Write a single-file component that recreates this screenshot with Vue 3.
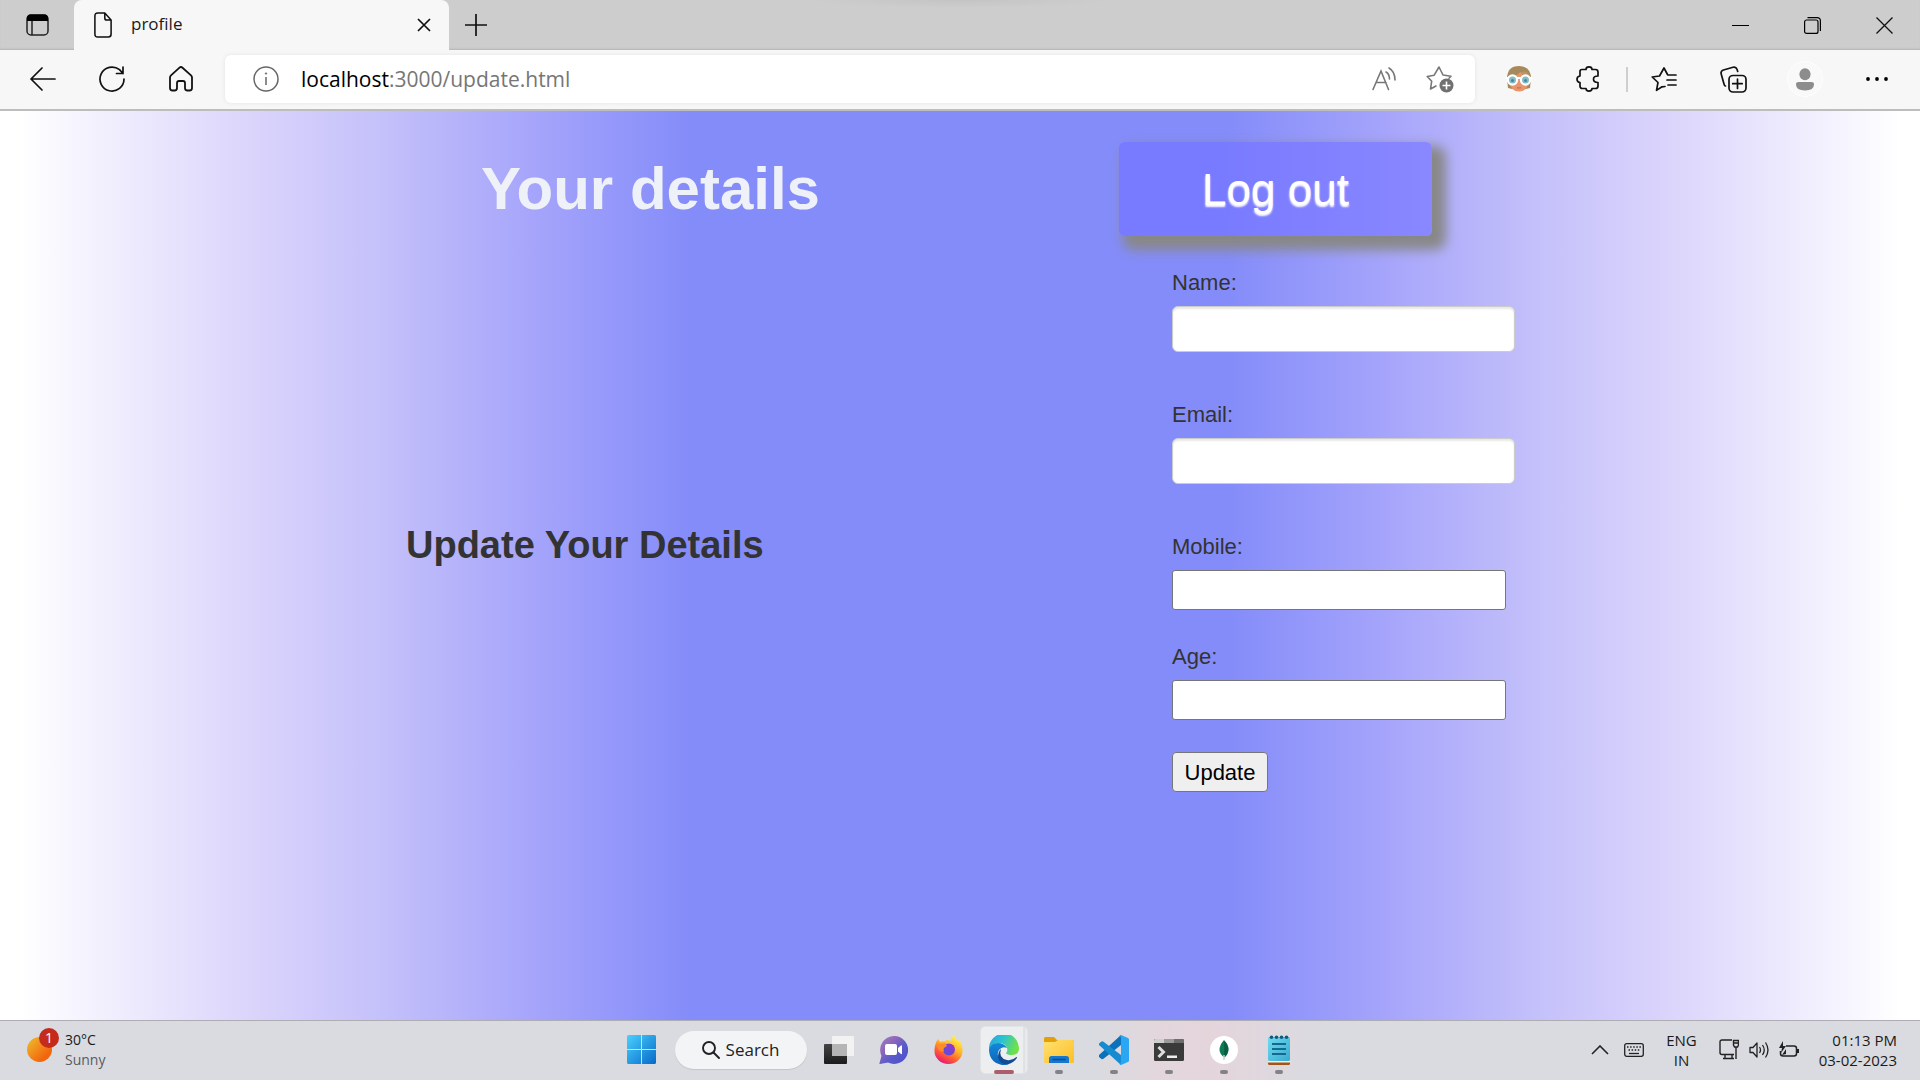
<script setup>
import { reactive } from 'vue'

const form = reactive({ name: '', email: '', mobile: '', age: '' })
</script>

<template>
  <div class="desktop">
    <header class="browser">
      <div class="tabstrip">
        <button class="icon-btn tab-actions" aria-label="Tab actions">
          <svg width="24" height="24" viewBox="0 0 24 24"><rect x="2" y="2" width="21" height="20" rx="4" fill="none" stroke="#222" stroke-width="1.5"/><path d="M2 8V5q0-3.500 3.500-3.500h14Q23 1.500 23 5v3z"/><path d="M7 8v14" stroke="#222" stroke-width="1.500"/></svg>
        </button>
        <div class="tab">
          <svg width="18" height="26" viewBox="0 0 20 26" preserveAspectRatio="none" fill="none" stroke="#111" stroke-width="1.700" stroke-linejoin="round"><path d="M4 1h8l7 7v14q0 3-3 3H4q-3 0-3-3V4q0-3 3-3zM12 1v5q0 2 2 2h5"/></svg>
          <span class="tab-title">profile</span>
          <button class="icon-btn" aria-label="Close tab"><svg width="14" height="14" viewBox="0 0 14 14" stroke="#111" stroke-width="1.700"><path d="M1 1l12 12M13 1L1 13"/></svg></button>
        </div>
        <button class="icon-btn new-tab" aria-label="New tab"><svg width="22" height="22" viewBox="0 0 22 22" stroke="#111" stroke-width="1.700"><path d="M11 0v22M0 11h22"/></svg></button>
        <div class="win-controls">
          <button class="icon-btn" aria-label="Minimize"><svg width="17" height="17" viewBox="0 0 17 17" stroke="#000" shape-rendering="crispEdges"><path d="M0 8.500h17"/></svg></button>
          <button class="icon-btn" aria-label="Restore"><svg width="17" height="17" viewBox="0 0 17 17" fill="none" stroke="#000" stroke-width="1.200"><rect x=".6" y="3" width="13.400" height="13.400" rx="2"/><path d="M3.500 .6h9.500q3.400 0 3.400 3.400v10"/></svg></button>
          <button class="icon-btn" aria-label="Close"><svg width="17" height="17" viewBox="0 0 17 17" stroke="#111" stroke-width="1.300"><path d="M.5.5l16 16M16.500.5l-16 16"/></svg></button>
        </div>
      </div>

      <div class="toolbar">
        <nav class="nav-buttons">
          <button class="icon-btn" aria-label="Back"><svg width="26" height="24" viewBox="0 0 26 24" fill="none" stroke="#111" stroke-width="1.700" stroke-linecap="round" stroke-linejoin="round"><path d="M25 12H1M12 1L1 12l11 11"/></svg></button>
          <button class="icon-btn" aria-label="Refresh"><svg width="26" height="26" viewBox="0 0 26 26" fill="none" stroke="#111" stroke-width="1.700" stroke-linecap="round" stroke-linejoin="round"><path d="M25 13a12 12 0 1 1-4.500-9.300L24 7.500M24 1v6.500h-6.500"/></svg></button>
          <button class="icon-btn" aria-label="Home"><svg width="24" height="26" viewBox="0 0 24 26" fill="none" stroke="#111" stroke-width="1.800" stroke-linejoin="round"><path d="M1 11.500q0-1.300 1-2.200L10.500 1.700q1.500-1.300 3 0L22 9.300q1 .9 1 2.200V22q0 2.500-2.500 2.500h-2Q16 24.500 16 22v-5q0-2-2-2h-4q-2 0-2 2v5q0 2.500-2.500 2.500h-2Q1 24.500 1 22z"/></svg></button>
        </nav>
        <div class="address">
          <svg width="26" height="26" viewBox="0 0 26 26" fill="none" stroke="#666" stroke-width="1.500"><circle cx="13" cy="13" r="12"/><path d="M13 11v8"/><circle cx="13" cy="7.500" r=".8" fill="#666" stroke-width=".6"/></svg>
          <p class="url"><span>localhost</span>:3000/update.html</p>
          <button class="icon-btn" aria-label="Read aloud"><svg width="25" height="24" viewBox="0 0 25 24" fill="none" stroke="#777" stroke-width="1.600" stroke-linecap="round"><path d="M1 22.500L9 4l7.500 18.500M4 15.500h10M14 5q3.500 2 3.500 7M17 1q6 3.500 6 12"/></svg></button>
          <button class="icon-btn" aria-label="Add to favorites"><svg width="28" height="28" viewBox="0 0 28 28"><path d="M10 21l-5.500 3 1.200-7.800L1.200 11.500l7-1.300L13 2l4 8 8 1.300-2 2" fill="none" stroke="#777" stroke-width="1.600" stroke-linejoin="round" stroke-linecap="round"/><circle cx="20.500" cy="20.500" r="7" fill="#707070"/><path d="M20.500 16.500v8M16.500 20.500h8" stroke="#fff" stroke-width="1.600"/></svg></button>
        </div>
        <div class="extensions">
          <button class="icon-btn" aria-label="Extension"><svg width="26" height="26" viewBox="0 0 26 26"><path d="M1 13Q1 0 13 0t12 13l-1 9-4 1H6l-4-1z" fill="#a68a5c"/><path d="M3.500 11.500Q11 10 14.500 6q3 4.500 8 5.500v5Q21 25.500 13 25.500T3.500 16.500z" fill="#e8956c"/><path d="M14.500 6q2 4 8 5.500l1-1Q22 4 14.500 6z" fill="#b5966a"/><path d="M0 12h26" stroke="#fff" stroke-width="2"/><circle cx="6.500" cy="14" r="4.600" fill="#86bcc8" stroke="#fff" stroke-width="2.200"/><circle cx="19.500" cy="14" r="4.600" fill="#86bcc8" stroke="#fff" stroke-width="2.200"/><circle cx="6.500" cy="14.500" r="1.500" fill="#4a8799"/><circle cx="19.500" cy="14.500" r="1.500" fill="#4a8799"/><path d="M11 21.500q2 1 4 0" stroke="#cf6d50" stroke-width="1.200" fill="none"/></svg></button>
          <button class="icon-btn" aria-label="Extensions"><svg width="24" height="26" viewBox="0 0 24 26" fill="none" stroke="#111" stroke-width="1.700" stroke-linejoin="round"><path d="M6 3.500h4Q10 .9 13 .9t3 2.600h3.500q2.500 0 2.500 2.500v4q-4.500 0-4.500 3.200T22 16.500V20q0 2.500-2.500 2.500H16q0 2.600-3 2.600t-3-2.600H6.500Q4 22.500 4 20v-3.500q-3-.5-3-3.300T4 10V5.500q0-2 2-2z"/></svg></button>
          <i class="divider"></i>
          <button class="icon-btn" aria-label="Favorites"><svg width="26" height="26" viewBox="0 0 26 26" fill="none" stroke="#111" stroke-width="1.700" stroke-linejoin="round" stroke-linecap="round"><path d="M14 20.500l-3 .3-5.500 3.600L7 16.500 1.200 11l7.300-1L13 2l3.500 6.500M17 9h8M16 14h9M17 19h8"/></svg></button>
          <button class="icon-btn" aria-label="Collections"><svg width="27" height="27" viewBox="0 0 27 27" fill="none" stroke="#111" stroke-width="1.700" stroke-linejoin="round" stroke-linecap="round"><rect x="9" y="9.500" width="17" height="16.500" rx="4"/><path d="M17.500 13v9.500M12.700 17.700h9.500M5.500 20Q4.500 20 4 18L1.200 8q-.8-3 2.300-4L13 1.200q3-.8 4 2l.7 2.300"/></svg></button>
          <button class="icon-btn spaced profile" aria-label="Profile"><svg width="18" height="23" viewBox="0 0 20 24" preserveAspectRatio="none" fill="#8c8c8c"><circle cx="10" cy="6.500" r="6.200"/><path d="M3 14.500h14q3 0 3 2.500 0 6.500-10 6.500T0 17q0-2.500 3-2.500z"/></svg></button>
          <button class="icon-btn spaced" aria-label="Settings"><svg width="22" height="4" viewBox="0 0 22 4"><circle cx="2" cy="2" r="1.900"/><circle cx="11" cy="2" r="1.900"/><circle cx="20" cy="2" r="1.900"/></svg></button>
        </div>
      </div>
    </header>

    <main class="page">
      <div class="page-head">
        <h1>Your details</h1>
        <button class="logout">Log out</button>
      </div>
      <div class="page-body">
        <h2>Update Your Details</h2>
        <form @submit.prevent>
          <label for="name">Name:</label>
          <input id="name" v-model="form.name" class="styled" type="text">
          <label for="email">Email:</label>
          <input id="email" v-model="form.email" class="styled" type="email">
          <label for="mobile">Mobile:</label>
          <input id="mobile" v-model="form.mobile" class="plain" type="text">
          <label for="age">Age:</label>
          <input id="age" v-model="form.age" class="plain" type="text">
          <button class="update" type="submit">Update</button>
        </form>
      </div>
    </main>

    <footer class="taskbar">
      <div class="weather">
        <div class="sun"><span class="badge">1</span></div>
        <p>30°C<br><span>Sunny</span></p>
      </div>

      <div class="apps">
        <button class="app" aria-label="Start"><svg width="29" height="29" viewBox="0 0 29 29"><defs><linearGradient id="win" x1="0" y1="0" x2="1" y2="1" gradientUnits="objectBoundingBox"><stop offset="0" stop-color="#4bd0fe"/><stop offset="1" stop-color="#0669c9"/></linearGradient></defs><path d="M1.500 0H14v14H0V1.500Q0 0 1.500 0zM15 0h12.500Q29 0 29 1.500V14H15zM0 15h14v14H1.500Q0 29 0 27.500zM15 15h14v12.500q0 1.500-1.500 1.500H15z" fill="url(#win)"/></svg></button>
        <button class="search"><svg width="18" height="18" viewBox="0 0 18 18" fill="none" stroke="#222" stroke-width="1.900" stroke-linecap="round"><circle cx="7" cy="7" r="6"/><path d="M11.500 11.500L17 17"/></svg>Search</button>
        <button class="app" aria-label="Task view"><svg width="30" height="28" viewBox="0 0 30 28"><defs><linearGradient id="tv" x1="0" y1="0" x2="0" y2="1"><stop offset="0" stop-color="#444"/><stop offset="1" stop-color="#1c1c1c"/></linearGradient></defs><rect y="8" width="23" height="20" rx="1" fill="url(#tv)"/><rect x="8" width="22" height="20" rx="1" fill="#f2f2f2"/><path d="M8 8h15v12H9q-1 0-1-1z" fill="#b5b5b5"/></svg></button>
        <button class="app" aria-label="Chat"><svg width="29" height="28" viewBox="0 0 29 28"><defs><linearGradient id="ch" x1="0" y1="0" x2="1" y2="1"><stop offset="0" stop-color="#8f86c8"/><stop offset=".3" stop-color="#9369b8"/><stop offset=".6" stop-color="#5a5acb"/><stop offset="1" stop-color="#4a50c8"/></linearGradient></defs><path d="M15 0a14 14 0 1 1-6 26.600L1 28q-1 0-.5-1L2.500 20A14 14 0 0 1 15 0z" fill="url(#ch)"/><rect x="6" y="8" width="12" height="11" rx="2" fill="#fff"/><path d="M19 12l3-2.500q1-.5 1 .5v7.500q0 1-1 .5L19 15.500z" fill="#fff"/></svg></button>
        <button class="app" aria-label="Firefox"><svg width="29" height="29" viewBox="0 0 29 29"><defs><linearGradient id="ff" x1=".8" y1=".1" x2=".3" y2="1"><stop offset="0" stop-color="#fff04a"/><stop offset=".4" stop-color="#ffb02a"/><stop offset=".7" stop-color="#ff5a33"/><stop offset="1" stop-color="#e8137c"/></linearGradient><linearGradient id="fp" x1="0" y1="1" x2="1" y2="0"><stop offset="0" stop-color="#4f55d8"/><stop offset="1" stop-color="#a02fd0"/></linearGradient></defs><path d="M4 4l2 3q2-1 4-.5L13 5q3 0 4 1 0-4 3-6 1 4 4 6l1-1q4 5 3.500 11a14 13 0 0 1-28 0Q.5 9 4 4z" fill="url(#ff)"/><circle cx="15" cy="14.500" r="6" fill="url(#fp)"/><path d="M3 10l8-2 2 3-3 2q-1 1 0 3l-2 1q-4-1-5-7z" fill="#ff8a2a"/></svg></button>
        <button class="app active" aria-label="Edge"><svg width="30" height="30" viewBox="0 0 30 30"><defs><linearGradient id="ea" x1="0" y1="0" x2="1" y2=".3"><stop offset="0" stop-color="#2ba0e0"/><stop offset=".5" stop-color="#2bc3d2"/><stop offset="1" stop-color="#6ee04a"/></linearGradient><linearGradient id="eb" x1="0" y1="0" x2="0" y2="1"><stop offset="0" stop-color="#1488d8"/><stop offset="1" stop-color="#0b64b8"/></linearGradient></defs><path d="M0 14A15 15 0 0 1 30 13q0 7-7 7-5 0-6-2 2-2 1-5-2-5-8-5-7 0-10 6z" fill="url(#ea)"/><path d="M0 14q2-6 9-6 6 0 9 5-5-2-8 2-3 5 1 10 3 4 9 4-4 1.500-8 .7Q0 27 0 14z" fill="url(#eb)"/><path d="M12 14q-3 9 6 11 5 1 9.500-3 .8 0 .5.800Q25 28 18 29.500q-8-1-9-7 0-6 3-8.500z" fill="#124a94"/></svg></button>
        <button class="app running" aria-label="File Explorer"><svg width="30" height="26" viewBox="0 0 30 26"><defs><linearGradient id="fo" x1="0" y1="0" x2="1" y2="1"><stop offset="0" stop-color="#ffe173"/><stop offset="1" stop-color="#fdbe23"/></linearGradient></defs><path d="M0 1.500Q0 0 1.500 0H10l3 3h15.500Q30 3 30 4.500V10H0z" fill="#e19f0a"/><path d="M0 5h11l3-2h14.500Q30 3 30 4.500v20q0 1.500-1.500 1.500h-27Q0 26 0 24.500z" fill="url(#fo)"/><path d="M5 26v-4.500Q5 19 7.500 19h15q2.500 0 2.500 2.500V26z" fill="#1677ce"/><path d="M9 22.500h12" stroke="#0b4b91" stroke-width="1.500" stroke-linecap="round"/></svg></button>
        <button class="app running" aria-label="Visual Studio Code"><svg width="30" height="30" viewBox="0 0 30 30"><path d="M22 0L0 20v2l2.500 2q1 .5 2-.3L22 10z" fill="#0b72b9"/><path d="M22 30L0 10V8.500L2.500 6.500q1-.5 2 .3L22 20z" fill="#168bd2"/><path d="M22 0l7 3q1 .5 1 1.500v21q0 1-1 1.500l-7 3q-1 0-1.500-1 1.500 0 1.500-2V3q0-2-1.500-2 .5-1 1.500-1z" fill="#2aa6f2"/></svg></button>
        <button class="app running" aria-label="Terminal"><svg width="30" height="22" viewBox="0 0 30 22"><rect width="30" height="22" rx="1.500" fill="#3a3a3a"/><path d="M0 4V1.500Q0 0 1.500 0H10v4z" fill="#cfcfcf"/><path d="M10 0h10v4H10z" fill="#9b9b9b"/><path d="M20 0h8.500Q30 0 30 1.500V4H20z" fill="#6d6d6d"/><path d="M4.500 8l5 5-5 5" fill="none" stroke="#ddd" stroke-width="3"/><path d="M13 16.500h10v2.500H13z" fill="#eee"/></svg></button>
        <button class="app running" aria-label="MongoDB Compass"><svg width="28" height="28" viewBox="0 0 28 28"><circle cx="14" cy="14" r="14" fill="#fff"/><path d="M14 4q5 5 4.500 10-.5 5-4 7.500Q10 19 9.500 14 9.500 9 14 4z" fill="#0b7a55"/><path d="M14.200 5q4.500 5 4 9.500-.5 4-4 7z" fill="#0a5c42"/><path d="M14 19v5" stroke="#bcd8cc" stroke-width="1.500"/></svg></button>
        <button class="app running" aria-label="Notepad"><svg width="24" height="30" viewBox="0 0 24 30"><defs><linearGradient id="np" x1="0" y1="0" x2="1" y2="1"><stop offset="0" stop-color="#6fdbf0"/><stop offset="1" stop-color="#3aa9d0"/></linearGradient></defs><path d="M1 25h22v3.500q0 1.500-1.500 1.500h-19Q1 30 1 28.500z" fill="#a3541a"/><path d="M1 25h22v2.500H1z" fill="#f5eee6"/><rect x="1" y="2" width="22" height="24" rx="1.500" fill="url(#np)"/><path d="M5 9h14M5 14h14M5 19h14" stroke="#126a8c" stroke-width="1.800"/><g fill="#0d5c7c"><circle cx="4.500" cy="2.200" r="1.800"/><circle cx="9.500" cy="2.200" r="1.800"/><circle cx="14.500" cy="2.200" r="1.800"/><circle cx="19.500" cy="2.200" r="1.800"/></g></svg></button>
      </div>

      <div class="tray">
        <svg width="18" height="10" viewBox="0 0 18 10" fill="none" stroke="#222" stroke-width="1.600"><path d="M1 9l8-8 8 8"/></svg>
        <svg class="keyboard" width="20" height="14" viewBox="0 0 20 14" fill="none" stroke="#222" stroke-width="1.300"><rect x=".7" y=".7" width="18.600" height="12.600" rx="2"/><path d="M3 4h14" stroke-dasharray="1.500 1.600"/><path d="M4.500 7h12" stroke-dasharray="1.500 1.600"/><path d="M5 10.500h10"/></svg>
        <p class="lang">ENG<br>IN</p>
        <div class="status">
          <svg width="20" height="21" viewBox="0 0 20 21" fill="none" stroke="#222" stroke-width="1.400"><path d="M13 1H3Q1 1 1 3v10.500q0 2 2 2h12M6 15.500V19M13 15.500V19M4 19.500h11M14.500 1.500h5V6l-1 2h-3l-1-2zM17 8v12M15 4h4"/></svg>
          <svg width="20" height="18" viewBox="0 0 20 18" fill="none" stroke="#222" stroke-width="1.300" stroke-linejoin="round"><path d="M1 6.500v5h3L8 16V2L4 6.500zM10.500 6q2 3 0 6M13.500 4q3.500 5 0 10M16.500 1.500q5 7.500 0 15"/></svg>
          <svg width="20" height="18" viewBox="0 0 20 18" fill="none" stroke="#222" stroke-width="1.500"><path d="M7 5h8q2.500 0 2.500 2.500v5q0 2.500-2.500 2.500H4q-2.500 0-2.500-2.500V10"/><path d="M19 8v4" stroke-width="2"/><path d="M4 0L0 7h3l-1 5 5-7H4zM3 14l4-1V8z" fill="#222" stroke="none"/></svg>
        </div>
        <p class="clock">01:13 PM<br>03-02-2023</p>
      </div>
    </footer>
  </div>
</template>

<style>
body { margin: 0; }
</style>

<style scoped>
* { box-sizing: border-box; }
p, h1, h2 { margin: 0; }
button { font: inherit; }
svg { display: block; flex: none; }

.desktop {
  display: flex;
  flex-direction: column;
  min-height: 100vh;
  font-family: "Open Sans", "Noto Sans", sans-serif;
  color: #1a1a1a;
}
.icon-btn {
  display: flex;
  align-items: center;
  justify-content: center;
  width: 36px;
  height: 36px;
  padding: 0;
  border: 0;
  background: none;
  flex: none;
}

/* browser chrome */
.browser { background: #f7f7f7; border-bottom: 2px solid #bdbdbd; }
.tabstrip {
  display: flex;
  align-items: center;
  height: 50px;
  background: radial-gradient(ellipse 150px 8px at 50% 0, #c4c4c4, #cdcdcd);
  box-shadow: inset 0 -2px 2px -1px #b4b4b4;
}
.tab-actions { width: 74px; }
.tab {
  display: flex;
  align-items: center;
  width: 375px;
  height: 50px;
  padding: 0 7px 0 20px;
  border-radius: 8px 8px 0 0;
  background: #f7f7f7;
}
.tab-title { flex: 1; padding-left: 19px; font-size: 17px; line-height: 24px; padding-bottom: 2px; }
.new-tab { width: 54px; }
.win-controls { display: flex; gap: 36px; margin-left: auto; padding-right: 18px; }

.toolbar { display: flex; align-items: center; height: 59px; padding: 0 25px 1px; }
.nav-buttons { display: flex; gap: 33px; }
.address {
  display: flex;
  align-items: center;
  flex: 1;
  height: 48px;
  margin: 0 26px;
  padding: 0 17px 0 28px;
  gap: 20px;
  border-radius: 6px;
  background: #fff;
  box-shadow: 0 0 4px #e4e4e4;
}
.url { flex: 1; padding-left: 2px; font-size: 21px; line-height: 28px; color: #767676; }
.url span { color: #000; }
.extensions { display: flex; align-items: center; gap: 33px; }
.divider { width: 2px; height: 25px; margin: 0 -15px 0 -13px; background: #cecece; }
.spaced { margin-left: 3px; }
.profile { border-radius: 50%; border: 1px solid #fff; background: #f9f9f9; }

/* web page */
.page {
  flex: 1;
  padding-top: 31px;
  background: linear-gradient(90deg, #fff 0%, #fff 1%, #ded8fc 12%, #c4c0fa 20%, #a5a4fb 28%, #848cf9 36%, #848cf9 64%, #a5a4fb 72%, #c4c0fa 80%, #ded8fc 88%, #fff 99%, #fff 100%);
  font-family: "Liberation Sans", Arial, sans-serif;
  color: #333;
}
.page-head { display: grid; grid-template-columns: 481fr 638fr 801fr; height: 124px; align-items: start; }
h1 { grid-column: 2; padding-top: 13px; font-size: 60px; line-height: 68px; color: #eef1f7; }
.logout {
  width: 313px;
  height: 94px;
  padding: 2px 0 0;
  border: 0;
  border-radius: 6px;
  background: linear-gradient(90deg, #787aff 30%, #8a88ff);
  box-shadow: 9px 9px 12px 5px #888;
  font-size: 44px;
  line-height: 52px;
  color: #fff;
  text-shadow: 0 2px 2px #fff;
}
.page-body { display: grid; grid-template-columns: 406fr 766fr 748fr; align-items: center; }
h2 { grid-column: 2; font-size: 38px; line-height: 44px; }
form { display: flex; flex-direction: column; align-items: flex-start; font-size: 22px; padding-bottom: 32px; }
label { line-height: 34px; margin-bottom: 6px; }
input { background: #fff; font-size: 22px; padding: 0 8px; outline: none; }
.styled { width: 343px; height: 46px; margin-bottom: 46px; border: 1px solid #ccc; border-radius: 6px; box-shadow: inset 0 2px 2px #e8e8e8; }
.plain { width: 334px; height: 40px; margin-bottom: 30px; border: 1px solid #767676; border-radius: 3px; }
.update { width: 96px; height: 40px; margin-top: 2px; padding: 1px 0 0; border: 1px solid #767676; border-radius: 4px; background: #efefef; color: #000; }

/* taskbar */
.taskbar {
  display: grid;
  grid-template-columns: 1fr auto 1fr;
  align-items: center;
  height: 60px;
  padding-bottom: 2px;
  border-top: 1px solid #adadb3;
  background: linear-gradient(90deg, #d9dbe0 0%, #d9dbe0 57%, #e2d7dd 60%, #e4d5db 63%, #d9dbe1 69%, #dadbe0 100%);
  font-size: 15px;
  line-height: 20px;
}
.weather { display: flex; align-items: center; padding-left: 27px; gap: 13px; }
.weather p { font-size: 14px; }
.weather p span { color: #5a5b5f; }
.sun { position: relative; width: 25px; height: 25px; border-radius: 50%; background: linear-gradient(135deg, #efc02f, #f2660d 75%); }
.badge {
  position: absolute;
  left: 12px;
  top: -9px;
  width: 20px;
  height: 20px;
  border-radius: 50%;
  background: #c42b1c;
  color: #fff;
  font-size: 14px;
  line-height: 20px;
  text-align: center;
}
.apps { display: flex; align-items: center; gap: 7px; }
.app {
  position: relative;
  display: flex;
  align-items: center;
  justify-content: center;
  width: 48px;
  height: 48px;
  padding: 0;
  border: 0;
  border-radius: 5px;
  background: none;
}
.search {
  display: flex;
  align-items: center;
  justify-content: center;
  gap: 6px;
  width: 132px;
  height: 38px;
  margin: 0 1px 0 2px;
  padding: 0;
  border: 0;
  border-radius: 19px;
  background: #f3f4f5;
  box-shadow: 0 1px 1px #c4c5c9;
  font-size: 17px;
  line-height: 24px;
  color: #222;
}
.active::before { content: ""; position: absolute; inset: 0; border: 1px solid #e2e3e6; border-radius: 5px; background: linear-gradient(90deg, #edeef0 42px, #d5d6da 43px, #e9eaec 44px); }
.active svg { position: relative; }
.active::after, .running::after { content: ""; position: absolute; bottom: 0; left: 20px; width: 8px; height: 4px; border-radius: 2px; background: #828287; }
.active::after { left: 14px; width: 20px; background: #ad5e6d; }
.tray { display: flex; align-items: center; justify-content: flex-end; padding-right: 23px; }
.keyboard { margin-left: 15px; }
.lang { margin-left: 22px; text-align: center; }
.status { display: flex; align-items: center; gap: 10px; margin: 0 20px 0 22px; }
.clock { text-align: right; }
</style>
